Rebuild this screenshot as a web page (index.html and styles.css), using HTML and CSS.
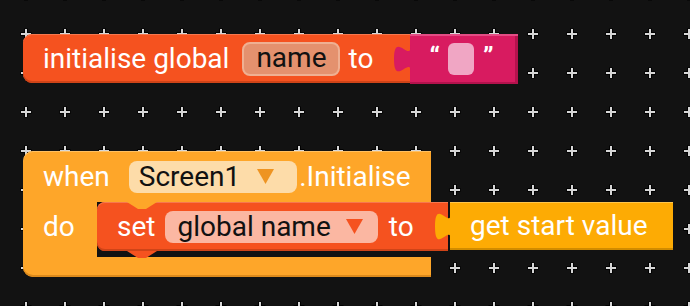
FILE: index.html
```html
<!DOCTYPE html>
<html lang="en">
<head>
    <meta charset="UTF-8">
    <meta name="viewport" content="width=device-width, initial-scale=1.0">
    <title>Blocks</title>
    <link rel="stylesheet" href="styles.css">
</head>
<body>
    <div class="workspace">
        <!-- global variable -->
        <div class="init-row">
            <div class="block init">
                <span class="label">initialise global</span>
                <span class="field name-field">name</span>
                <span class="label to">to</span>
            </div>
            <div class="block text-block">
                <svg class="tab" width="17" height="28" viewBox="0 0 8 15" preserveAspectRatio="none"><path d="M8,0 C8,10 0,-8 0,7.5 S8,5 8,15 Z" fill="#d81b60"/></svg>
                <span class="quote">“</span>
                <span class="text-slot"></span>
                <span class="quote">”</span>
            </div>
        </div>

        <!-- screen event -->
        <div class="block event">
            <div class="event-head">
                <span class="label">when</span>
                <span class="field dropdown screen-field">Screen1
                    <svg class="arrow" width="17" height="15" viewBox="0 0 17 15"><polygon points="0,0 17,0 8.5,15" fill="#ee9422"/></svg>
                </span>
                <span class="label dot">.Initialise</span>
            </div>
            <div class="event-body">
                <div class="do-col"><span class="label">do</span></div>
                <div class="slot">
                    <div class="block setter">
                        <svg class="notch" width="30" height="7" viewBox="0 0 30 7"><polygon points="0,0 11,7 19,7 30,0" fill="#fea629"/></svg>
                        <svg class="bump" width="30" height="7" viewBox="0 0 30 7"><polygon points="0,0 11,7 19,7 30,0" fill="#f5521f"/></svg>
                        <span class="label">set</span>
                        <span class="field dropdown var-field">global name
                            <svg class="arrow" width="17" height="15" viewBox="0 0 17 15"><polygon points="0,0 17,0 8.5,15" fill="#f5521f"/></svg>
                        </span>
                        <span class="label to">to</span>
                    </div>
                    <div class="block getter">
                        <svg class="tab" width="16" height="29" viewBox="0 0 8 15" preserveAspectRatio="none"><path d="M8,0 C8,10 0,-8 0,7.5 S8,5 8,15 Z" fill="#fdab04"/></svg>
                        <span class="label">get start value</span>
                    </div>
                </div>
            </div>
            <div class="event-foot"></div>
        </div>
    </div>
</body>
</html>
```

FILE: styles.css
```css
body {
    margin: 0;
    height: 306px;
    overflow: hidden;
    font-family: Roboto, "Liberation Sans", sans-serif;
    font-size: 28px;
    color: #fff;
    background-color: #121212;
    background-image: url("data:image/svg+xml,%3Csvg xmlns='http://www.w3.org/2000/svg' width='39' height='39'%3E%3Cpath d='M13.5 19h11M19 13.5v11' stroke='%23000' stroke-width='4'/%3E%3Cpath d='M14 19h10M19 14v10' stroke='%23d6d6d6' stroke-width='2'/%3E%3C/svg%3E");
    background-position: 7px 15px;
}

.workspace { padding: 34px 0 0 23px; }

.label { line-height: 1; white-space: nowrap; }

.block { position: relative; display: flex; align-items: center; flex: none; }

.field {
    display: flex;
    align-items: center;
    flex: none;
    color: #111;
    line-height: 1;
    border-radius: 8px;
    white-space: nowrap;
}

/* initialise global */
.init-row { display: flex; align-items: flex-start; }

.init {
    height: 49px;
    padding: 0 37px 0 20px;
    background: #f5521f;
    border-radius: 9px 0 0 9px;
    box-shadow: inset 0 1px 0 #f7784e, inset 0 -2px 0 #cf4418;
}
.name-field {
    height: 34px;
    box-sizing: border-box;
    padding: 0 11px 2px 12px;
    margin-left: 13px;
    background: #e4916e;
    border: 2px solid #efb092;
}
.init .to { margin-left: 9px; }

.text-block {
    height: 50px;
    width: 108px;
    box-sizing: border-box;
    padding: 0 0 0 19px;
    background: #d81b60;
    box-shadow: inset 0 2px 0 #e44d85, inset -3px 0 0 #b4124d, inset 0 -2px 0 #b4124d;
}
.text-block .tab { position: absolute; left: -16px; top: 11px; overflow: visible; }
.quote { font-size: 26px; font-weight: bold; line-height: 1; padding-bottom: 6px; }
.text-slot {
    width: 26px;
    height: 32px;
    margin: 0 9px 0 8px;
    background: #f0a6c4;
    border-radius: 6px;
}

/* screen event */
.event {
    display: block;
    width: 408px;
    margin-top: 67px;
}
.event-head {
    display: flex;
    align-items: center;
    height: 51px;
    padding-left: 20px;
    background: #fea629;
    border-radius: 10px 0 0 0;
    box-shadow: inset 0 1px 0 #ffc062;
}
.screen-field {
    height: 32px;
    padding: 0 23px 0 10px;
    margin-left: 19px;
    margin-right: 2px;
    background: #fddca9;
}
.screen-field .arrow { margin-left: 17px; }

.event-body { display: flex; height: 55px; }
.do-col {
    flex: none;
    width: 74px;
    box-sizing: border-box;
    padding: 8px 0 0 20px;
    background: #fea629;
}
.slot { display: flex; flex: none; align-items: flex-start; }

.setter {
    width: 351px;
    height: 49px;
    box-sizing: border-box;
    padding-left: 20px;
    background: #f5521f;
    border-radius: 8px 0 0 8px;
    box-shadow: inset 0 1px 0 #f7784e, inset 0 -2px 0 #cf4418;
}
.setter .notch { position: absolute; top: 0; left: 30px; }
.setter .bump { position: absolute; bottom: -7px; left: 30px; }
.var-field {
    height: 32px;
    padding: 0 15px 0 12px;
    margin-left: 10px;
    background: #fbb7a2;
}
.var-field .arrow { margin-left: 15px; }
.setter .to { margin-left: 11px; }

.getter {
    height: 48px;
    margin-left: 2px;
    padding: 0 26px 0 20px;
    background: #fdab04;
    box-shadow: inset 0 1px 0 #ffc64d, inset 0 -2px 0 #d18c00;
}
.getter .tab { position: absolute; left: -15px; top: 10px; overflow: visible; }

.event-foot {
    height: 20px;
    background: #fea629;
    border-radius: 0 0 0 10px;
    box-shadow: inset 0 -2px 0 #dc8a1c;
}
```
